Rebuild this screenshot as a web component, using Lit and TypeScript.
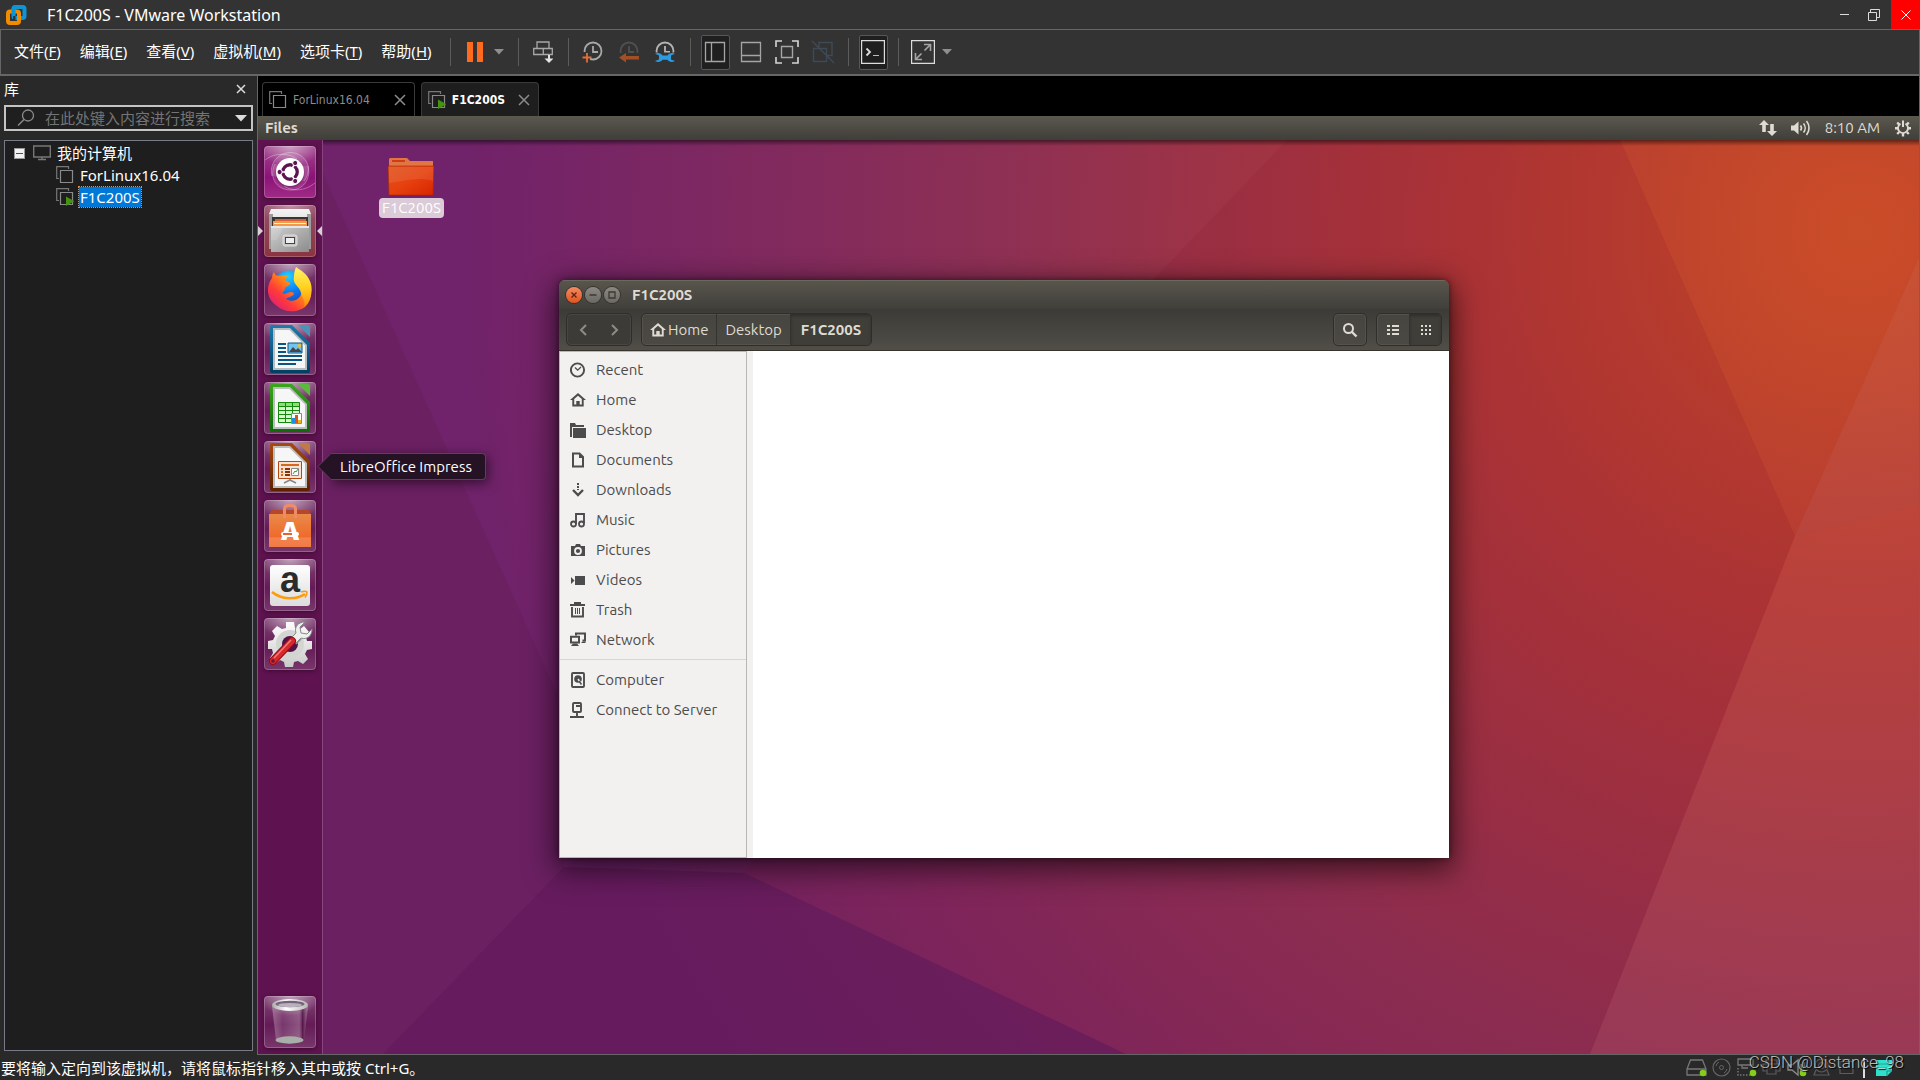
import { LitElement, html, svg, css, type TemplateResult } from "lit";
import { customElement, property } from "lit/decorators.js";
import { classMap } from "lit/directives/class-map.js";

type Art = TemplateResult;

const icon = (w: number, h: number, body: unknown): Art =>
  html`<svg width=${w} height=${h} viewBox="0 0 ${w} ${h}" aria-hidden="true" fill="none">${body}</svg>`;

/* ---------- VMware chrome icons ---------- */

const logo = icon(22, 22, svg`
  <g stroke-width="4">
    <rect x="8.500" y="3" width="11" height="11" rx="2" stroke="#0f95d4"/>
    <rect x="3" y="7.500" width="11" height="11.500" rx="2" stroke="#f38b00"/>
    <path d="M8.500 10V5.500a2 2 0 0 1 2-2.500" stroke="#0f95d4"/>
    <path d="M8 12h2.500v4H8z" fill="#333" stroke="none"/>
  </g>`);

const pauseIcon = icon(16, 22, svg`<path d="M0 1h6v20H0zM10 1h6v20h-6z" fill="#ff6a1c"/>`);
const caret = icon(10, 6, svg`<path d="M0 0h10L5 5.500z" fill="#8f8f8f"/>`);

const snapIcon = icon(20, 22, svg`
  <g stroke="#a8a8a8" stroke-width="1.300">
    <path d="M4 7.500V1h12v6.500M.7 7.500h9.600v6H.7zM10.300 7.500h9v6h-9z"/></g>
  <path d="M16 14v5" stroke="#e3e3e3" stroke-width="2"/><path d="M11.500 17.500h9L16 22z" fill="#e3e3e3"/>`);

const clockBase = (c: string) => svg`
  <circle cx="11" cy="10" r="8.500" stroke=${c} stroke-width="1.800"/>
  <path d="M11 5v6h5" stroke=${c} stroke-width="1.800"/>`;

const takeIcon = icon(22, 22, svg`${clockBase("#a8a8a8")}
  <path d="M0 11h8v10H0z" fill="#333"/>
  <path d="M5 12v9.500M.5 16.500h9" stroke="#e07038" stroke-width="1.800"/>`);
const revertIcon = icon(22, 22, svg`${clockBase("#505050")}
  <path d="M0 12h22v10H0z" fill="#333"/><path d="M1 16.500l7-4.500v3h13v3.400H8v3z" fill="#a34f26"/>`);
const manageIcon = icon(22, 22, svg`${clockBase("#b4b4b4")}
  <path d="M0 11.500h22V22H0z" fill="#333"/>
  <path d="M1 12.800c3-1.500 6-.8 7.500 1.700h5c1.500-2.500 4.500-3.200 7.500-1.700l-4 1.700v4l4 1.500c-3 1.700-6 1-7.500-1.200h-5C7 21 4 21.700 1 20l4-1.500v-4z" fill="#2d9be0"/>`);
const libraryIcon = icon(22, 22, svg`<path d="M1.500 1.500h19v19h-19zM7.500 1.500v19" stroke="#a5a5a5" stroke-width="1.300"/>`);
const thumbIcon = icon(22, 22, svg`<path d="M1.500 1.500h19v19h-19zM1.500 14.500h19" stroke="#a5a5a5" stroke-width="1.300"/>`);
const fullIcon = icon(24, 24, svg`
  <path d="M1 7V1h6M17 1h6v6M23 17v6h-6M7 23H1v-6" stroke="#d5d5d5" stroke-width="1.600"/>
  <path d="M6.500 6.500h11v11h-11z" stroke="#a5a5a5" stroke-width="1.400"/>`);
const unityIcon = icon(24, 24, svg`
  <path d="M8 8V2.500h13v13h-5M2.500 8.500h13v13h-13zM1 1l22 22" stroke="#3e4a55" stroke-width="1.400"/>`);
const consoleIcon = icon(24, 24, svg`
  <path d="M.5.5h23v23H.5z" stroke="#dcdcdc" stroke-width="1.400"/>
  <path d="M5.500 8.500L9 12l-3.500 3.500" stroke="#dcdcdc" stroke-width="1.800"/><path d="M12 15.500h6" stroke="#bbb"/>`);
const stretchIcon = icon(24, 24, svg`
  <path d="M.5.5h23v23H.5z" stroke="#dcdcdc" stroke-width="1.400"/>
  <path d="M13.500 10.500L19 5M13 4.500h6.500V11M10.500 13.500L5 19M4.500 13v6.500H11" stroke="#a5a5a5" stroke-width="1.600"/>`);

const vmIcon = (running: boolean) => icon(18, 18, svg`
  <path d="M3 12.500H.7V.7h11.800V3" stroke="#777" stroke-width="1.200"/>
  <path d="M4.500 4.500h12v12h-12z" stroke="#8a8a8a" stroke-width="1.200"/>
  ${running ? svg`<path d="M10 8.500l8.500 4.800-8.500 4.700z" fill="#45940f"/>` : ""}`);

const monitorIcon = icon(18, 16, svg`<path d="M.7 1h16.600v11H.7zM9 12v2.500M5 14.500h8" stroke="#777" stroke-width="1.400"/>`);
const closeIcon = (size: number, c: string) => icon(size, size,
  svg`<path d="M1 1L${size - 1} ${size - 1}M${size - 1} 1L1 ${size - 1}" stroke=${c} stroke-width="1.500"/>`);
const searchIcon = icon(18, 18, svg`<circle cx="11" cy="6.500" r="5.500" stroke="#8a8a8a" stroke-width="1.300"/><path d="M7 10.500L1 16.500" stroke="#8a8a8a" stroke-width="1.500"/>`);

/* ---------- status bar devices ---------- */

const dot = svg`<circle cx="17" cy="16" r="3.300" fill="#84cf1c"/>`;
const devices: { name: string; art: unknown }[] = [
  { name: "Hard disk", art: svg`<path d="M4.500 3h12l3.500 9v6H1v-6zM1 12h19" stroke="#777" stroke-width="1.300"/>${dot}` },
  { name: "CD/DVD", art: svg`<circle cx="10.500" cy="10.500" r="8.500" stroke="#666" stroke-width="1.200"/><circle cx="10.500" cy="10.500" r="2" stroke="#666"/><path d="M5 9a6 6 0 0 1 3-4M16 12a6 6 0 0 1-3 4" stroke="#666"/>` },
  { name: "Network", art: svg`<path d="M2 2h15v6H2zM6 8v3h6" stroke="#777" stroke-width="1.300"/><path d="M2 11v7h14v-6" stroke="#777" stroke-dasharray="1.500 1.500" stroke-width="1.500"/>${dot}` },
  { name: "Printer", art: svg`<path d="M5 7V3h11v4M5 14H2V7h17v7h-3M6 11h9v6H6z" stroke="#5d5d5d" stroke-width="1.200"/>` },
  { name: "Sound", art: svg`<path d="M2 8h4l6-5v15l-6-5H2zM15 7v7M18 5v5" stroke="#8a8a8a" stroke-width="1.300"/>${dot}` },
  { name: "Camera", art: svg`<circle cx="10.500" cy="8.500" r="6.500" stroke="#5d5d5d" stroke-width="1.200"/><circle cx="10.500" cy="8.500" r="3" stroke="#5d5d5d"/><path d="M5 13l-2 5h15l-2-5" stroke="#5d5d5d" stroke-width="1.200"/>` },
  { name: "Display", art: svg`<path d="M4 4.500h13v12H4zM7 4.500v-2h7" stroke="#5d5d5d" stroke-width="1.200"/>` },
];
const noteIcon = icon(18, 18, svg`<path d="M1 1h16v11l-5 5H1z" fill="#2fe0cb"/><path d="M12 17v-5h5" stroke="#1b8f86"/><path d="M3 5h12M3 9h9" stroke="#1fa89a"/>`);

/* ---------- Ubuntu indicators ---------- */

const netIndicator = icon(18, 18, svg`<path d="M5 1L0 6h3.200v7h3.600V6H10zM13 17l5-5h-3.200V5h-3.600v7H8z" fill="#dfdbd2"/>`);
const soundIndicator = icon(20, 18, svg`<path d="M0 6.500h3L7.500 2.500v13L3 11.500H0z" fill="#dfdbd2"/>
  <path d="M9.500 6.500a4 4 0 0 1 0 5M12.500 4.500a7 7 0 0 1 0 9M15.500 2a11 11 0 0 1 0 14" stroke="#dfdbd2" stroke-width="1.600"/>`);
const gearIndicator = icon(18, 18, svg`<path d="M6.500 4.700a5 5 0 1 0 5 0" stroke="#dfdbd2" stroke-width="1.800"/>
  <path d="M9 1.500V8" stroke="#dfdbd2" stroke-width="2"/>
  <path d="M1 9.300h3M14 9.300h3M3.200 15l2-2M14.800 15l-2-2M9 14v3.500M3.200 3.500l2.300 2.300M14.800 3.500l-2.300 2.300" stroke="#dfdbd2" stroke-width="2.400"/>`);

/* ---------- launcher artwork, 52px tiles ---------- */

const office = (a: string, b: string, fold: string, body: unknown) => icon(52, 52, svg`
  <defs><linearGradient id="doc" x1="0" y1="0" x2="0" y2="1"><stop stop-color=${a}/><stop offset="1" stop-color=${b}/></linearGradient></defs>
  <path d="M8 2h20l18 18v28a2 2 0 0 1-2 2H8a2 2 0 0 1-2-2V4a2 2 0 0 1 2-2z" fill="url(#doc)"/>
  <path d="M34 2h10a2 2 0 0 1 2 2v10z" fill=${fold}/>
  <path d="M9 5h17l17 17v25H9z" fill="#b9bdbd"/><path d="M11 7h14.500L41 22.500V45H11z" fill="#f6f6f6"/>${body}`);

const ubuntuArt = icon(52, 52, svg`
  <g stroke="#fff" stroke-opacity=".3" stroke-width="1">
    <path d="M8 30C4 14 20 2 34 8c12 6 13 18 6 27" fill="#fff" fill-opacity=".12"/>
    <path d="M44 20c4 15-8 28-24 23C9 39 6 28 11 18" fill="#fff" fill-opacity=".1"/>
    <path d="M1 14c10-8 24-7 32-1M51 37c-10 8-22 9-31 3"/></g>
  <circle cx="26" cy="27" r="14.500" fill="#000" opacity=".2"/><circle cx="26" cy="26" r="14" fill="#fff"/>
  <circle cx="26" cy="26" r="7.200" stroke="#5b1550" stroke-width="3.400"/>
  <path d="M26 26H12M26 26l7-12M26 26l7 12" stroke="#fff" stroke-width="1.500"/>
  <circle cx="26" cy="26" r="5.300" fill="#fff"/>
  <g fill="#5b1550" stroke="#fff" stroke-width="1"><circle cx="15.600" cy="26" r="2.600"/><circle cx="31.200" cy="17" r="2.600"/><circle cx="31.200" cy="35" r="2.600"/></g>`);

const filesArt = icon(52, 52, svg`
  <defs><linearGradient id="cab" x1="0" y1="0" x2="1" y2="1"><stop stop-color="#d0d0d0"/><stop offset="1" stop-color="#8c8c8c"/></linearGradient>
  <linearGradient id="top" x1="0" y1="0" x2="0" y2="1"><stop stop-color="#f4f4f4"/><stop offset="1" stop-color="#bdbdbd"/></linearGradient></defs>
  <path d="M7 4h38l2 5v35H5V9z" fill="url(#top)"/><path d="M5 9h4v35H5zM43 9h4v35h-4z" fill="#9c9c9c"/>
  <path d="M8 12h36v11H8z" fill="#3c3434"/>
  <path d="M11 14h31v3H11z" fill="#d3623a"/><path d="M9 16h34v6H9z" fill="#f09a4a"/><path d="M10 18h32v1H10z" fill="#fff2dc"/>
  <path d="M7 21h38v26H7z" fill="url(#cab)"/><path d="M7 21h38v2H7z" fill="#e6e6e6"/><path d="M7 23h12l-6 12H7z" fill="#fff" opacity=".12"/>
  <rect x="19" y="30" width="14" height="11" rx="2" fill="#c6c6c6" stroke="#dedede"/><rect x="21.500" y="32.500" width="9" height="6" fill="#eee" stroke="#444"/>`);

const firefoxArt = icon(52, 52, svg`
  <defs>
    <linearGradient id="fox" x1="1" y1="0" x2="0" y2="1"><stop stop-color="#ffde2e"/><stop offset=".35" stop-color="#ff980e"/><stop offset=".65" stop-color="#ff3a3a"/><stop offset="1" stop-color="#cf1390"/></linearGradient>
    <radialGradient id="globe" cx=".45" cy=".15" r="1"><stop stop-color="#27d0ff"/><stop offset=".4" stop-color="#0a7cf2"/><stop offset="1" stop-color="#27208a"/></radialGradient>
    <linearGradient id="flame" x1="0" y1="0" x2="0" y2="1"><stop stop-color="#fff36a"/><stop offset=".5" stop-color="#ffd21f"/><stop offset="1" stop-color="#ff8a10"/></linearGradient></defs>
  <circle cx="26" cy="26" r="19.500" fill="url(#globe)"/>
  <path d="M10 8c1 3 3 4 5 4 3-1 6-1 9 0l-3 4 5 3c0 3-4 3-5 5 0 3-2 4-3 5 3 2 6-1 9-1 2 0 3 1 3 2-2 3-6 3-8 5 8 5 17-1 16-11 4 5 3-6 0-12l5 3c5 9 6 20-1 27-6 6-20 8-29 0C2 35 2 22 8 14c0-3 1-5 2-6z" fill="url(#fox)"/>
  <path d="M32 3c4 3 9 5 13 12 5 9 3 21-5 28 2-6-2-9-3-14-1-7-9-8-7-17 0-4 1-6 2-9z" fill="url(#flame)"/>`);

const writerArt = office("#1f7aad", "#003f63", "#4d93b8", svg`
  <path d="M14 21h8M14 25h8M14 29h8M14 33h24M14 37h24M14 41h18" stroke="#0a5482" stroke-width="2"/>
  <path d="M24 20h14v10H24z" fill="#74c3ee" stroke="#0a5482"/><circle cx="35.500" cy="22.500" r="1.700" fill="#e6c22e"/>
  <path d="M25 29l4-5 3 3 2-2 4 4z" fill="#454545"/>`);
const calcArt = office("#3aa61c", "#0e6a07", "#59bb3c", svg`
  <path d="M14 20h22v21H14z" fill="#d9f7cf"/><path d="M14 20h22v4H14z" fill="#8fdd7a"/>
  <path d="M14.500 20.500h21v20h-21zM14 24.500h22M14 28.500h22M14 32.500h22M14 36.500h22M21.500 20v21M28.500 20v21" stroke="#128a0a"/>
  <path d="M27.500 31.500h10v10h-10z" fill="#fff" stroke="#888"/><path d="M28 36h3v5h-3z" fill="#1d8fe0"/><path d="M31 33h3v8h-3z" fill="#d8531e"/><path d="M34 38h3v3h-3z" fill="#e8b71d"/>`);
const impressArt = office("#a84a10", "#5c2200", "#bf7a48", svg`
  <path d="M14.500 20.500h23v17h-23z" fill="#f9e2d2" stroke="#b4480f"/><path d="M17 24h18" stroke="#d2691e" stroke-width="2"/>
  <path d="M17 28h2M17 31h2M17 34h2" stroke="#d2691e" stroke-width="2"/><path d="M21 28h5M21 31h5M21 34h5" stroke="#8a3208" stroke-width="2"/>
  <path d="M27.500 27.500h7v7h-7z" fill="#fff" stroke="#888"/><path d="M29 33l2-3 1 1 2-3" stroke="#39a32a"/>
  <path d="M26 38v1l-6 3M26 39l6 3" stroke="#888" stroke-width="1.700"/>`);

const softwareArt = icon(52, 52, svg`
  <defs><linearGradient id="bag" x1="0" y1="0" x2="0" y2="1"><stop stop-color="#e88a4a"/><stop offset=".7" stop-color="#f06a2a"/><stop offset=".72" stop-color="#f38250"/><stop offset="1" stop-color="#f07a44"/></linearGradient></defs>
  <path d="M8 10h37l2 5H5z" fill="#b5482a"/><path d="M5 14h42v33H5z" fill="url(#bag)"/>
  <path d="M20.500 18V9c0-2 1-3.500 4-3.500h3c3 0 4 1.500 4 3.500v9" stroke="#f28a66" stroke-width="3"/>
  <text x="26" y="40" text-anchor="middle" font-family="Open Sans, sans-serif" font-weight="800" font-size="25" fill="#fff">A</text>
  <rect x="17" y="32" width="18" height="4" rx="2" fill="#fff"/><path d="M19 34h9" stroke="#e8622a" stroke-width="2"/>`);
const amazonArt = icon(52, 52, svg`
  <defs><linearGradient id="am" x1="0" y1="0" x2="0" y2="1"><stop stop-color="#fff"/><stop offset="1" stop-color="#dcdcdc"/></linearGradient></defs>
  <rect x="6" y="6" width="40" height="41" rx="3" fill="url(#am)"/>
  <text x="26" y="33" text-anchor="middle" font-family="Liberation Sans, sans-serif" font-weight="700" font-size="36" fill="#2b2b2b">a</text>
  <path d="M8 33c10 8 24 8 33 2" stroke="#ff9a0a" stroke-width="2.600"/><path d="M37 33c3-1 5-1 6 0 0 2-1 4-2 5.500" stroke="#ff9a0a" stroke-width="1.600"/>`);
const settingsArt = icon(52, 52, svg`
  <defs><linearGradient id="gr" x1="0" y1="0" x2="0" y2="1"><stop stop-color="#fdfdfd"/><stop offset="1" stop-color="#c9cbc9"/></linearGradient></defs>
  <path d="M22 4h8l1 6 4 2 5-4 5 6-3 5 1 4h5v8l-5 1-2 4 3 5-5 5-5-3-4 1-1 5h-8l-1-5-4-2-5 4-5-6 3-5-1-4H4v-8l5-1 2-4-3-5 5-5 5 3 4-1z" fill="url(#gr)"/>
  <circle cx="26" cy="26" r="14" fill="#d3d5d3"/><circle cx="26" cy="26" r="8" fill="#55124a"/>
  <path d="M29 18l6 6" stroke="#8f9492" stroke-width="7"/>
  <path d="M41 4c-7 0-11 5-9 11l-5 5 5 5 5-5c6 2 11-2 11-9l-5 5-6-1-1-6z" fill="#eef0ee" stroke="#858a88" stroke-width="1"/>
  <path d="M9 43L28 23" stroke="#8d0f14" stroke-width="8" stroke-linecap="round"/><path d="M9 43L28 23" stroke="#d8282c" stroke-width="6" stroke-linecap="round"/>
  <path d="M10 40L27 22" stroke="#f07b78" stroke-width="1.500"/><circle cx="9" cy="43" r="1.800" fill="#6d1238"/>`);
const trashArt = icon(52, 52, svg`
  <defs><linearGradient id="bin" x1="0" x2="1"><stop stop-color="#fff" stop-opacity=".3"/><stop offset=".3" stop-color="#fff" stop-opacity=".12"/><stop offset=".75" stop-color="#fff" stop-opacity=".25"/><stop offset=".85" stop-color="#3c0a32" stop-opacity=".4"/><stop offset="1" stop-color="#fff" stop-opacity=".3"/></linearGradient>
  <linearGradient id="rim" x1="0" x2="1"><stop stop-color="#a9aba8"/><stop offset=".4" stop-color="#fff"/><stop offset="1" stop-color="#b5b7b4"/></linearGradient></defs>
  <path d="M8 10h36l-4 34c-4 4-24 4-28 0z" fill="url(#bin)"/>
  <ellipse cx="25.500" cy="44" rx="14" ry="3.700" fill="#a9aea9"/>
  <ellipse cx="26" cy="9" rx="18" ry="6" fill="url(#rim)"/><ellipse cx="26" cy="8" rx="14.500" ry="3.200" fill="#74637a"/><ellipse cx="26" cy="9" rx="12" ry="2" fill="#b9b1bb"/>`);

const launcherItems: { name: string; art: Art; kind?: string; active?: boolean; tip?: boolean }[] = [
  { name: "Search your computer", art: ubuntuArt, kind: "dash" },
  { name: "Files", art: filesArt, kind: "running", active: true },
  { name: "Firefox Web Browser", art: firefoxArt },
  { name: "LibreOffice Writer", art: writerArt },
  { name: "LibreOffice Calc", art: calcArt },
  { name: "LibreOffice Impress", art: impressArt, tip: true },
  { name: "Ubuntu Software", art: softwareArt },
  { name: "Amazon", art: amazonArt },
  { name: "System Settings", art: settingsArt },
];

/* ---------- file manager icons ---------- */

const K = "#4c4c4c";
const houseArt = (c: string) => svg`<path d="M8 1L0 8h2.300v6.500h11.400V8H16zM8 3.700l3.800 3.400v5.500H9.700V9H6.300v3.600H4.200V7.100z" fill=${c} fill-rule="evenodd"/>`;
const places: { name: string; art: unknown }[] = [
  { name: "Recent", art: svg`<circle cx="7.500" cy="8" r="6.600" stroke=${K} stroke-width="1.900"/><path d="M5 5.500l2.700 2.700L11 5" stroke=${K} stroke-width="1.300"/>` },
  { name: "Home", art: houseArt(K) },
  { name: "Desktop", art: svg`<path d="M0 1h5l1 2h8v2H2v10H0z" fill=${K}/><path d="M3 6h13v10H3z" fill=${K}/>` },
  { name: "Documents", art: svg`<path d="M3 1.500h6.500L13 5v9.500H3z" stroke=${K} stroke-width="2"/><path d="M9 1v5h5z" fill=${K}/>` },
  { name: "Downloads", art: svg`<path d="M8 1v7" stroke=${K} stroke-width="2" stroke-dasharray="2 1"/><path d="M3 8l5 5 5-5" stroke=${K} stroke-width="2.400"/>` },
  { name: "Music", art: svg`<path d="M6 12V2h8v9.500" stroke=${K} stroke-width="1.900"/><circle cx="3.500" cy="12" r="2.500" stroke=${K} stroke-width="1.800"/><circle cx="11.500" cy="12" r="2.500" stroke=${K} stroke-width="1.800"/>` },
  { name: "Pictures", art: svg`<path d="M1 4h4l1-2h4l1 2h4v10H1z" fill=${K}/><circle cx="8" cy="9" r="3" stroke="#f2f1f0" stroke-width="1.800"/>` },
  { name: "Videos", art: svg`<path d="M5 4h10v9H5zM1 5l3.500 3.500L1 12z" fill=${K}/>` },
  { name: "Trash", art: svg`<path d="M0 3h15M4 1h7M2 5v9.500h11V5" stroke=${K} stroke-width="1.900"/><path d="M5.500 6v6M7.500 6v6M9.500 6v6" stroke=${K} stroke-width="1"/>` },
  { name: "Network", art: svg`<path d="M6 3.500V1.500h9v7h-2.500" stroke=${K} stroke-width="2"/><path d="M1 4.800h8v5.700H1z" stroke=${K} stroke-width="2"/><path d="M1 14l2-2.500h4L9 14zM11 11h4.500v-1.500h-3z" fill=${K}/>` },
];
const systemPlaces: { name: string; art: unknown }[] = [
  { name: "Computer", art: svg`<rect x="2" y="1" width="12" height="14" rx="1" stroke=${K} stroke-width="1.900"/><circle cx="8" cy="7" r="3.800" fill=${K}/><path d="M8 7l4 6" stroke="#f2f1f0" stroke-width="1.500"/><path d="M9 9l2.500 3.500" stroke=${K} stroke-width="1.500"/>` },
  { name: "Connect to Server", art: svg`<rect x="3" y="1" width="8" height="9" rx="1" stroke=${K} stroke-width="1.900"/><path d="M6 4h4M7 11v3M0 15h14" stroke=${K} stroke-width="1.900"/>` },
];

@customElement("launcher-tile")
export class LauncherTile extends LitElement {
  @property() label = "";
  @property() kind = "";
  @property({ attribute: false }) art?: Art;
  @property({ type: Boolean }) active = false;
  @property({ type: Boolean }) tip = false;

  static styles = css`
    :host { display: block; position: relative; }
    .tile {
      display: block; width: 52px; height: 52px; margin: 0 auto; padding: 0; border: 0; border-radius: 4px;
      background:
        radial-gradient(ellipse 60% 38% at 50% 0, rgba(255,255,255,.5), rgba(255,255,255,0)),
        linear-gradient(rgba(255,255,255,.22), rgba(255,255,255,.04) 55%, rgba(255,255,255,.16));
      box-shadow: inset 0 0 0 1px rgba(255,255,255,.22), 0 1px 4px rgba(0,0,0,.4);
    }
    .dash { background: radial-gradient(ellipse 60% 38% at 50% 0, rgba(255,255,255,.5), rgba(255,255,255,0)), linear-gradient(#a2488f, #8c1278 60%, #a02c86); }
    .running { background: radial-gradient(ellipse 60% 38% at 50% 0, rgba(255,255,255,.4), rgba(255,255,255,0)), linear-gradient(#94506a, #8a3440); }
    .tile svg { display: block; overflow: visible; }
    .mark { position: absolute; top: 21px; border: 5px solid transparent; }
    .mark.left { left: 0; border-left-color: #d8d0d5; border-right: 0; }
    .mark.right { right: 0; border-right-color: #d8d0d5; border-left: 0; }
    .tip {
      position: absolute; z-index: 2; left: 73px; top: 12px; height: 27px; box-sizing: border-box; padding: 0 13px 0 9px;
      border: 1px solid #5d4059; border-left: 0; border-radius: 0 4px 4px 0; background: #261225; color: #fff;
      font: 15px/25px "Ubuntu", "Noto Sans", sans-serif; white-space: nowrap; box-shadow: 2px 3px 12px rgba(0,0,0,.55);
    }
    .tip svg { position: absolute; right: 100%; top: -1px; display: block; }
  `;

  render() {
    return html`
      <button class="tile ${this.kind}" aria-label=${this.label}>${this.art}</button>
      ${this.active ? html`<span class="mark left"></span><span class="mark right"></span>` : ""}
      ${this.tip ? html`<span class="tip" role="tooltip">${icon(14, 27, svg`<path d="M14 .5L1 13.500l13 13" fill="#261225" stroke="#5d4059"/>`)}${this.label}</span>` : ""}
    `;
  }
}

@customElement("file-window")
export class FileWindow extends LitElement {
  static styles = css`
    :host {
      display: flex; flex-direction: column; border-radius: 6px 6px 0 0; overflow: hidden;
      font: 15px/20px "Ubuntu", "Noto Sans", sans-serif; color: #4c4c4c;
      box-shadow: 0 8px 30px 4px rgba(0,0,0,.6), 0 0 6px rgba(0,0,0,.5);
    }
    button { font: inherit; color: inherit; border: 0; background: none; padding: 0; margin: 0; }
    svg { display: block; flex: none; }
    .title { display: flex; align-items: center; height: 29px; padding: 0 7px; gap: 3px; background: linear-gradient(#59564d, #403f3a); box-shadow: inset 0 1px #6b685f; color: #dfdbd2; }
    .title h1 { margin: 0 0 0 9px; font: inherit; font-weight: 700; }
    .dot { width: 16px; height: 16px; border-radius: 50%; background: linear-gradient(#8b8981, #6b6963); box-shadow: 0 0 0 1px #35332f; display: grid; place-items: center; }
    .dot.close { background: linear-gradient(#f58a62, #e2541f); }
    .bar { display: flex; align-items: center; height: 42px; box-sizing: border-box; padding: 0 7px; gap: 9px; background: linear-gradient(#3c3b37, #504e47); border-bottom: 1px solid #35342f; color: #dfdbd2; }
    .group { display: flex; height: 33px; box-sizing: border-box; border: 1px solid #2f2e2a; border-radius: 5px; background: linear-gradient(#47453f, #4b4943); box-shadow: inset 0 0 0 1px #54524b; overflow: hidden; }
    .group.flat { background: #3c3b37; box-shadow: inset 0 0 0 1px #484640; color: #8f8c84; }
    .group button { display: flex; align-items: center; justify-content: center; min-width: 32px; }
    .group button + button { border-left: 1px solid #34332e; }
    .group.flat button + button { border-left: 0; }
    .group .on { background: #3f3e39; box-shadow: inset 0 2px 3px rgba(0,0,0,.25); }
    .group.path button { gap: 2px; padding: 0 8px; }
    .group.path .on { padding: 0 10px; font-weight: 700; }
    .push { margin-left: auto; }
    .body { flex: 1; display: flex; min-height: 0; background: #fff; }
    nav { width: 188px; flex: none; padding-top: 3px; background: #f2f1f0; border: 1px solid #b9b5b0; box-sizing: border-box; }
    ul { list-style: none; margin: 0; padding: 0; }
    ul + ul { margin-top: 4px; padding-top: 5px; border-top: 1px solid #d8d6d3; }
    li button { display: flex; align-items: center; gap: 10px; width: 100%; height: 30px; padding: 0 10px; text-align: left; }
    .grip { width: 6px; background: #f2f1f0; }
  `;

  private places(list: { name: string; art: unknown }[]) {
    return html`<ul>${list.map((p) => html`<li><button>${icon(16, 16, p.art)}<span>${p.name}</span></button></li>`)}</ul>`;
  }

  render() {
    const steps = [1, 5, 9];
    return html`
      <div class="title">
        <button class="dot close" aria-label="Close">${icon(8, 8, svg`<path d="M1.500 1.500l5 5M6.500 1.500l-5 5" stroke="#5a2512" stroke-width="1.300"/>`)}</button>
        <button class="dot" aria-label="Minimize">${icon(8, 8, svg`<path d="M.5 4h7" stroke="#3a3934" stroke-width="1.300"/>`)}</button>
        <button class="dot" aria-label="Maximize">${icon(8, 8, svg`<path d="M1 1h6v6H1z" stroke="#3a3934" stroke-width="1.300"/>`)}</button>
        <h1>F1C200S</h1>
      </div>
      <div class="bar">
        <div class="group flat">
          <button aria-label="Back">${icon(8, 12, svg`<path d="M7 1L2 6l5 5" stroke="#8f8c84" stroke-width="2"/>`)}</button>
          <button aria-label="Forward">${icon(8, 12, svg`<path d="M1 1l5 5-5 5" stroke="#8f8c84" stroke-width="2"/>`)}</button>
        </div>
        <div class="group path">
          <button>${icon(16, 16, houseArt("#dfdbd2"))}<span>Home</span></button>
          <button>Desktop</button>
          <button class="on">F1C200S</button>
        </div>
        <div class="group push">
          <button aria-label="Search">${icon(16, 16, svg`<circle cx="6.500" cy="6.500" r="4.500" stroke="#dfdbd2" stroke-width="2"/><path d="M9.500 9.500l5 5" stroke="#dfdbd2" stroke-width="2.400"/>`)}</button>
        </div>
        <div class="group">
          <button aria-label="List view">${icon(12, 12, steps.map((y) => svg`<path d="M0 ${y}h3v2H0zM5 ${y}h7v2H5z" fill="#dfdbd2"/>`))}</button>
          <button class="on" aria-label="Icon view">${icon(12, 12, steps.map((y) => steps.map((x) => svg`<path d="M${x} ${y}h2v2h-2z" fill="#dfdbd2"/>`)))}</button>
        </div>
      </div>
      <div class="body">
        <nav aria-label="Places">${this.places(places)}${this.places(systemPlaces)}</nav>
        <div class="grip"></div>
      </div>
    `;
  }
}

@customElement("guest-desktop")
export class GuestDesktop extends LitElement {
  static styles = css`
    :host { display: flex; flex-direction: column; font: 15px/20px "Ubuntu", "Noto Sans", sans-serif; color: #dfdbd2; overflow: hidden; }
    svg { display: block; flex: none; }
    .panel { display: flex; align-items: center; gap: 14px; height: 24px; padding: 0 7px 0 7px; background: linear-gradient(#5b584f, #3f3e39); }
    .panel .app { margin-right: auto; font-weight: 700; }
    .desk { flex: 1; position: relative; display: flex; min-height: 0; }
    .paper { position: absolute; inset: 0; width: 100%; height: 100%; }
    .shade { position: absolute; inset: 0 0 auto 0; height: 6px; background: linear-gradient(rgba(0,0,0,.5), rgba(0,0,0,0)); }
    .launcher { position: relative; z-index: 1; width: 65px; box-sizing: border-box; display: flex; flex-direction: column; gap: 7px; padding: 6px 0; background: #5f1250; border-right: 1px solid #84467d; }
    .launcher .last { margin-top: auto; }
    .folder { position: absolute; left: 121px; top: 18px; display: flex; flex-direction: column; align-items: center; gap: 2px; padding: 0; border: 0; background: none; font: inherit; color: #fff; }
    .folder span { padding: 0 3px; border-radius: 4px; background: rgba(237,232,235,.85); }
    .window { position: absolute; left: 301px; top: 140px; width: 890px; height: 578px; }
  `;

  render() {
    return html`
      <div class="panel">
        <span class="app">Files</span>
        ${netIndicator}${soundIndicator}<time>8:10 AM</time>${gearIndicator}
      </div>
      <div class="desk">
        <svg class="paper" viewBox="0 0 1661 914" preserveAspectRatio="none" aria-hidden="true">
          <defs>
            <radialGradient id="sun" gradientUnits="userSpaceOnUse" cx="1600" cy="90" r="1500">
              <stop stop-color="#c94c28"/><stop offset=".1" stop-color="#c0442c"/><stop offset=".25" stop-color="#b13836"/>
              <stop offset=".4" stop-color="#a13443"/><stop offset=".57" stop-color="#8e3054"/><stop offset=".77" stop-color="#7d2861"/><stop offset=".93" stop-color="#70226a"/><stop offset="1" stop-color="#70226a"/>
            </radialGradient>
          </defs>
          <path d="M0 0h1661v914H0z" fill="url(#sun)"/>
          <path d="M1029 0H1362L1537 396 1332 914H868L486 733 895 140z" fill="#7d0a28" opacity=".1"/>
          <path d="M1362 0H1661V118L1537 396z" fill="#e86a28" opacity=".07"/>
          <path d="M1661 118V364L1537 396z" fill="#fff" opacity=".05"/>
          <path d="M1661 364V914H1332L1537 396z" fill="#ff9a80" opacity=".09"/>
          <path d="M0 0H50L302 560 306 727 125 914H0z" fill="#6a2060" opacity=".8"/>
          <path d="M306 727L486 733 868 914H125z" fill="#5f1857" opacity=".6"/>
        </svg>
        <div class="shade"></div>
        <nav class="launcher" aria-label="Launcher">
          ${launcherItems.map((i) => html`<launcher-tile .label=${i.name} .kind=${i.kind ?? ""} .art=${i.art} .active=${!!i.active} .tip=${!!i.tip}></launcher-tile>`)}
          <launcher-tile class="last" .label=${"Trash"} .art=${trashArt}></launcher-tile>
        </nav>
        <button class="folder">
          ${icon(46, 38, svg`
            <defs><linearGradient id="fl" x1="0" y1="0" x2="1" y2="1"><stop stop-color="#e0531c"/><stop offset=".5" stop-color="#e6410f"/><stop offset="1" stop-color="#d92400"/></linearGradient></defs>
            <path d="M2 0h17l3 3h23v20H1V1z" fill="#e27544"/><path d="M4 2h13v2H4z" fill="#cf3d14"/>
            <path d="M0 9q0-1 1-1h44q1 0 1 1l-1 28H1z" fill="url(#fl)" stroke="#a8280c" stroke-width=".6"/><path d="M1 9h44v14C30 18 14 24 1 25z" fill="#fff" opacity=".09"/>`)}
          <span>F1C200S</span>
        </button>
        <file-window class="window"></file-window>
      </div>
    `;
  }
}

const menus = [["文件", "F"], ["编辑", "E"], ["查看", "V"], ["虚拟机", "M"], ["选项卡", "T"], ["帮助", "H"]];

@customElement("app-root")
export class AppRoot extends LitElement {
  static styles = css`
    :host { display: flex; flex-direction: column; height: 100vh; background: #292929; color: #fff; font: 15px/22px "Noto Sans", "Noto Sans CJK SC", sans-serif; }
    * { box-sizing: border-box; }
    button { font: inherit; color: inherit; background: none; border: 0; padding: 0; margin: 0; }
    svg { display: block; flex: none; }
    .title { display: flex; align-items: stretch; height: 30px; padding-left: 5px; background: #333; border-bottom: 1px solid #666; }
    .title .name { display: flex; align-items: center; gap: 20px; margin-right: auto; font-size: 16px; }
    .title button { width: 29px; display: grid; place-items: center; }
    .title .close { margin-left: 3px; background: #f00; }
    .toolbar { display: flex; align-items: center; gap: 7px; height: 46px; padding: 0 8px 0 13px; background: #333; border: 1px solid #666; border-top: 0; border-bottom-width: 2px; }
    .menus { display: flex; gap: 19px; margin: 0 8px 2px 0; }
    .menus u { text-underline-offset: 2px; }
    .tool { width: 29px; height: 35px; display: grid; place-items: center; border-radius: 2px; }
    .tool.on { background: #1f1f1f; border: 1px solid #1f669f; }
    .split { display: flex; }
    .drop { width: 18px; display: grid; place-items: center; }
    .sep { width: 7px; height: 28px; background: linear-gradient(#5c5c5c, #5c5c5c) center / 1px 100% no-repeat; }
    main { flex: 1; display: flex; min-height: 0; }
    aside { width: 257px; flex: none; display: flex; flex-direction: column; padding: 0 4px 4px; }
    .head { display: flex; align-items: center; justify-content: space-between; height: 29px; padding: 0 7px 3px 0; }
    .head h2 { margin: 0; font: inherit; }
    .search { display: flex; align-items: center; gap: 10px; height: 26px; padding: 0 4px 0 11px; border: 2px solid #c4c4c4; background: #1f1f1f; }
    .search input { flex: 1; min-width: 0; padding: 0; border: 0; outline: 0; background: none; color: #fff; font: inherit; }
    .search input::placeholder { color: #747474; opacity: 1; }
    .tree { flex: 1; margin: 9px 0 0; padding: 1px 9px; border: 1px solid #767b85; background: #1e1e1e; list-style: none; width: 249px; }
    .tree ul { margin: 0; padding: 0 0 0 42px; list-style: none; }
    .row { display: flex; align-items: center; gap: 5px; height: 22px; }
    .tree .row span { padding: 0 1px; line-height: 20px; }
    .tree .row .sel { background: #0078d7; outline: 1px dotted #f08a3c; }
    .box { width: 11px; height: 11px; background: #f2f2f2; border: 1px solid #999; display: grid; place-items: center; }
    .row .box { margin-right: 3px; }
    .vm { flex: 1; min-width: 0; display: flex; flex-direction: column; border: solid #666; border-width: 0 1px 1px; background: #000; }
    .tabs { display: flex; gap: 6px; height: 40px; padding: 6px 4px 0; }
    .tab { display: flex; align-items: center; gap: 13px; padding: 0 8px 0 6px; border: 1px solid #3a3a3a; border-bottom: 0; border-radius: 4px 4px 0 0; color: #8c8c8c; font: 12px/18px "DejaVu Sans Condensed", "Noto Sans", sans-serif; }
    .tab .pick { display: flex; align-items: center; gap: 6px; }
    .tab.gap { gap: 24px; }
    .tab.on { background: #1e1e1e; color: #fff; }
    .tab.on .pick { font-weight: 700; }
    guest-desktop { flex: 1; min-height: 0; }
    footer { position: relative; display: flex; align-items: center; gap: 4px; height: 25px; padding: 0 27px 0 1px; }
    footer p { margin: 0 auto 0 0; }
    footer .bar { width: 2px; height: 20px; margin: 0 6px 0 2px; background: #ddd; }
    .mark { position: absolute; right: 16px; top: -4px; color: rgba(225,225,225,.8); font: 17px/22px "Roboto", "Liberation Sans", sans-serif; font-weight: 300; text-shadow: 1px 1px 1px #000; }
  `;

  private tool(name: string, art: Art, on = false) {
    return html`<button class=${classMap({ tool: true, on })} aria-label=${name}>${art}</button>`;
  }

  render() {
    const sep = html`<span class="sep"></span>`;
    return html`
      <header class="title">
        <div class="name">${logo}<span>F1C200S - VMware Workstation</span></div>
        <button aria-label="Minimize">${icon(10, 10, svg`<path d="M0 4.500h9" stroke="#ddd"/>`)}</button>
        <button aria-label="Restore">${icon(12, 12, svg`<path d="M.5 3.500h8v8h-8zM2.500 3V.5h9v8H9" stroke="#ddd"/>`)}</button>
        <button class="close" aria-label="Close">${icon(10, 10, svg`<path d="M.5.5l9 9M9.500.5l-9 9" stroke="#fff"/>`)}</button>
      </header>
      <div class="toolbar">
        <div class="menus">${menus.map(([t, k]) => html`<button>${t}(<u>${k}</u>)</button>`)}</div>
        ${sep}
        <div class="split">${this.tool("Pause", pauseIcon)}<button class="drop" aria-label="Power options">${caret}</button></div>
        ${sep}${this.tool("Send Ctrl+Alt+Del", snapIcon)}${sep}
        ${this.tool("Take snapshot", takeIcon)}${this.tool("Revert snapshot", revertIcon)}${this.tool("Manage snapshots", manageIcon)}
        ${sep}
        ${this.tool("Library", libraryIcon, true)}${this.tool("Thumbnails", thumbIcon)}${this.tool("Full screen", fullIcon)}${this.tool("Unity", unityIcon)}
        ${sep}${this.tool("Console", consoleIcon, true)}${sep}
        <div class="split">${this.tool("Stretch", stretchIcon)}<button class="drop" aria-label="Stretch options">${caret}</button></div>
      </div>
      <main>
        <aside>
          <div class="head"><h2>库</h2><button aria-label="Close library">${closeIcon(10, "#ddd")}</button></div>
          <div class="search">
            ${searchIcon}
            <input type="text" aria-label="搜索" placeholder="在此处键入内容进行搜索" />
            <button aria-label="Search options">${icon(12, 7, svg`<path d="M0 0h12L6 6.500z" fill="#ddd"/>`)}</button>
          </div>
          <ul class="tree">
            <li>
              <div class="row"><button class="box" aria-label="Collapse">${icon(7, 1, svg`<path d="M0 .5h7" stroke="#2f4fa8"/>`)}</button>${monitorIcon}<span>我的计算机</span></div>
              <ul>
                <li class="row">${vmIcon(false)}<span>ForLinux16.04</span></li>
                <li class="row">${vmIcon(true)}<span class="sel">F1C200S</span></li>
              </ul>
            </li>
          </ul>
        </aside>
        <section class="vm">
          <div class="tabs">
            <div class="tab gap"><button class="pick">${vmIcon(false)}ForLinux16.04</button><button aria-label="Close tab">${closeIcon(12, "#8c8c8c")}</button></div>
            <div class="tab on"><button class="pick">${vmIcon(true)}F1C200S</button><button aria-label="Close tab">${closeIcon(12, "#8c8c8c")}</button></div>
          </div>
          <guest-desktop></guest-desktop>
        </section>
      </main>
      <footer>
        <p>要将输入定向到该虚拟机，请将鼠标指针移入其中或按 Ctrl+G。</p>
        ${devices.map((d) => html`<button aria-label=${d.name}>${icon(21, 21, d.art)}</button>`)}
        <span class="bar"></span>${noteIcon}
        <span class="mark">CSDN @Distance_98</span>
      </footer>
    `;
  }
}
